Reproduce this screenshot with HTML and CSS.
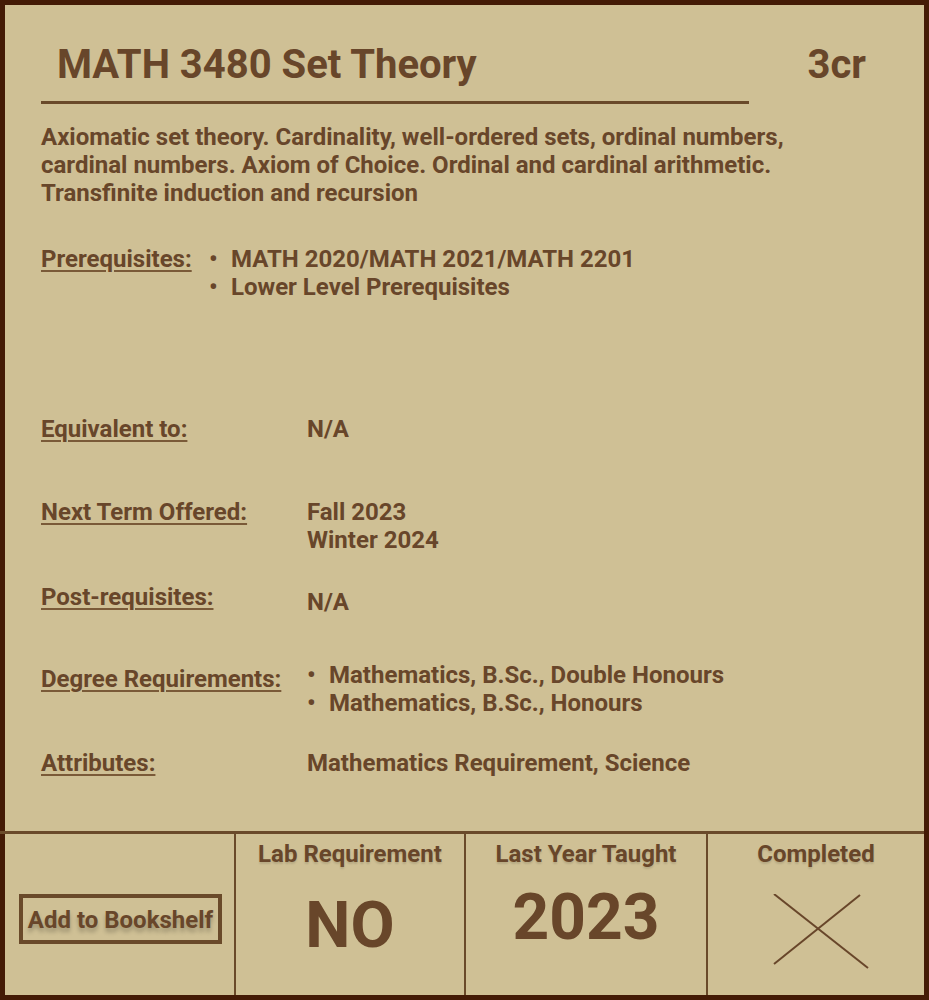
FILE: index.html
```html
<!DOCTYPE html>
<html lang="en">
<head>
<meta charset="utf-8">
<title>MATH 3480 Set Theory</title>
<link rel="stylesheet" href="styles.css">
</head>
<body>
<div class="card">
  <main class="main">
    <header class="title-row">
      <h1 class="title">MATH 3480 Set Theory</h1>
      <span class="credits">3cr</span>
    </header>
    <hr class="rule">
    <p class="desc">Axiomatic set theory. Cardinality, well-ordered sets, ordinal numbers, cardinal numbers. Axiom of Choice. Ordinal and cardinal arithmetic. Transfinite induction and recursion</p>

    <div class="row row-prereq">
      <span class="label">Prerequisites:</span>
      <ul class="bullets">
        <li>MATH 2020/MATH 2021/MATH 2201</li>
        <li>Lower Level Prerequisites</li>
      </ul>
    </div>

    <div class="row row-equiv">
      <span class="label">Equivalent to:</span>
      <div class="value">N/A</div>
    </div>

    <div class="row row-next">
      <span class="label">Next Term Offered:</span>
      <div class="value">Fall 2023<br>Winter 2024</div>
    </div>

    <div class="row row-post">
      <span class="label">Post-requisites:</span>
      <div class="value value-low">N/A</div>
    </div>

    <div class="row row-degree">
      <span class="label label-low">Degree Requirements:</span>
      <ul class="bullets">
        <li>Mathematics, B.Sc., Double Honours</li>
        <li>Mathematics, B.Sc., Honours</li>
      </ul>
    </div>

    <div class="row row-attr">
      <span class="label">Attributes:</span>
      <div class="value">Mathematics Requirement, Science</div>
    </div>
  </main>

  <section class="bottom">
    <div class="cell cell-btn">
      <button class="shelf-btn" type="button">Add to Bookshelf</button>
    </div>
    <div class="cell">
      <div class="cell-head">Lab Requirement</div>
      <div class="big big-no">NO</div>
    </div>
    <div class="cell">
      <div class="cell-head">Last Year Taught</div>
      <div class="big big-year">2023</div>
    </div>
    <div class="cell cell-done">
      <div class="cell-head">Completed</div>
      <svg class="cross" width="96" height="76" viewBox="0 0 96 76" aria-hidden="true">
        <line x1="1" y1="0" x2="95" y2="74" />
        <line x1="87" y1="1" x2="1" y2="70" />
      </svg>
    </div>
  </section>
</div>
</body>
</html>
```

FILE: styles.css
```css
* { box-sizing: border-box; }

html, body {
  margin: 0;
  padding: 0;
}

body {
  font-family: Roboto, "Liberation Sans", Arial, sans-serif;
  color: #68462a;
  background: #cfc095;
}

.card {
  width: 929px;
  height: 1000px;
  border: 5px solid #441b06;
  background: #cfc095;
  display: flex;
  flex-direction: column;
}

.main {
  flex: 1;
  padding: 37px 58px 0 36px;
}

.title-row {
  display: flex;
  justify-content: space-between;
  align-items: center;
  padding-left: 16px;
}

.title,
.credits {
  margin: 0;
  font-size: 40px;
  line-height: 46px;
  font-weight: 700;
}

.rule {
  border: 0;
  margin: 13px 0 0 0;
  width: 708px;
  height: 3px;
  background: #6a4a2a;
}

.desc {
  margin: 19px 0 0 0;
  font-size: 24px;
  line-height: 28px;
  font-weight: 700;
  width: 800px;
}

.row {
  display: grid;
  grid-template-columns: 266px 1fr;
  font-size: 24px;
  line-height: 28px;
  font-weight: 700;
}

.label {
  text-decoration: underline;
  text-decoration-thickness: 2px;
  text-underline-offset: 3px;
  text-decoration-color: #7a5a38;
}

.bullets {
  list-style: none;
  margin: 0;
  padding: 0;
}

.bullets li::before {
  content: "\2022";
  display: inline-block;
  width: 22px;
}

.row-prereq { margin-top: 38px; grid-template-columns: 168px 1fr; }
.row-equiv { margin-top: 114px; }
.row-next { margin-top: 55px; }
.row-post { margin-top: 29px; }
.value-low { padding-top: 5px; }
.row-degree { margin-top: 45px; grid-template-columns: 266px 1fr; }
.label-low { padding-top: 4px; }
.row-attr { margin-top: 32px; }

.bottom {
  height: 164px;
  margin-left: -5px;
  padding-left: 5px;
  border-top: 3px solid #6a4a2a;
  display: grid;
  grid-template-columns: 229px 230px 242px 218px;
}

.cell {
  border-left: 2px solid #6a4a2a;
  text-align: center;
}

.cell-btn {
  border-left: 0;
  padding: 60px 0 0 14px;
  text-align: left;
}

.shelf-btn {
  width: 203px;
  height: 50px;
  border: 4px solid #6a4a2a;
  background: transparent;
  color: #68462a;
  font-family: Roboto, "Liberation Sans", Arial, sans-serif;
  font-size: 24px;
  font-weight: 700;
  padding: 2px 0 0 0;
  text-shadow: 0 4px 4px rgba(0, 0, 0, 0.25);
}

.cell-head {
  padding-top: 6px;
  font-size: 24px;
  line-height: 28px;
  font-weight: 700;
  text-shadow: 0 2px 2px rgba(0, 0, 0, 0.12);
}

.big {
  font-size: 64px;
  line-height: 64px;
  font-weight: 700;
}

.big-no { margin-top: 26px; }
.big-year { margin-top: 18px; }

.cross {
  display: block;
  margin: 26px 0 0 65px;
}

.cross line {
  stroke: #68462a;
  stroke-width: 2;
}
```
